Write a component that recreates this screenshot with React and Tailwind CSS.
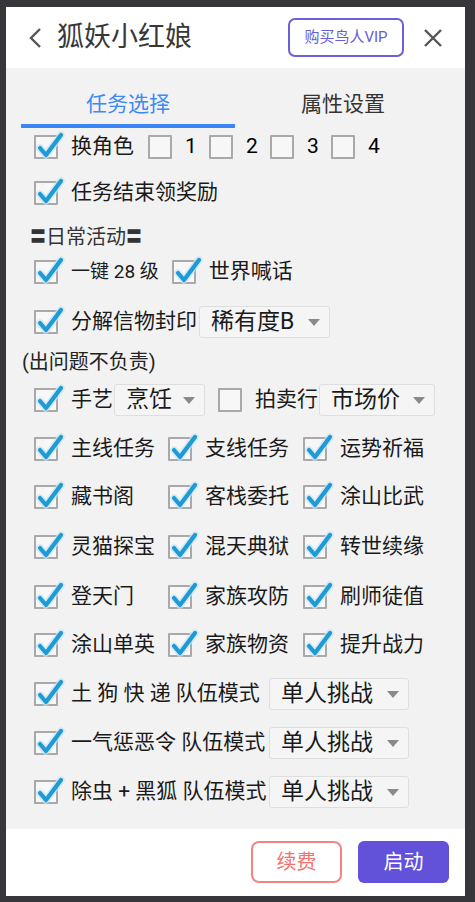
import React from "react";

const Box = ({ checked = true }) => (
  <span className="relative inline-block w-[24px] h-[24px] shrink-0 border-2 border-[#a9a9a9] bg-[#f7f7f7] rounded-[1px]">
    {checked && (
      <svg className="absolute left-[-4px] top-[-8px] overflow-visible" width="34" height="34" viewBox="0 0 34 34">
        <path d="M8 19 L14 26 L29 6" fill="none" stroke="#c4e6f6" strokeWidth="7.5" strokeLinecap="round" strokeLinejoin="round" opacity="0.7" />
        <path d="M8 19 L14 26 L29 6" fill="none" stroke="#1f9ad4" strokeWidth="4.2" strokeLinecap="round" strokeLinejoin="round" />
      </svg>
    )}
  </span>
);

const Select = ({ value, className }) => (
  <div className={`h-[32px] flex items-center justify-between border border-[#dedede] bg-[#f5f5f5] rounded-[3px] pl-[11px] pr-[9px] text-[23px] text-[#1a1a1a] ${className}`}>
    <span>{value}</span>
    <svg width="12" height="7" viewBox="0 0 12 7"><path d="M0 0 H12 L6 7 Z" fill="#8a8a8a" /></svg>
  </div>
);

const Item = ({ label, checked = true, className = "" }) => (
  <div className={`flex items-center gap-[13px] ${className}`}>
    <Box checked={checked} />
    <span className="text-[21px] text-[#1a1a1a] whitespace-nowrap">{label}</span>
  </div>
);

const grid = [
  ["主线任务", "支线任务", "运势祈福"],
  ["藏书阁", "客栈委托", "涂山比武"],
  ["灵猫探宝", "混天典狱", "转世续缘"],
  ["登天门", "家族攻防", "刷师徒值"],
  ["涂山单英", "家族物资", "提升战力"],
];
const gridGaps = ["mt-[17px]", "mt-[16px]", "mt-[18px]", "mt-[18px]", "mt-[16px]"];

const team = [
  ["土 狗 快 递 队伍模式", "mt-[17px]"],
  ["一气惩恶令 队伍模式", "mt-[17px]"],
  ["除虫 + 黑狐 队伍模式", "mt-[17px]"],
];

export default function App() {
  return (
    <div className="w-[475px] h-[902px] bg-[#37373b] pt-[7px] pl-[6px] font-['Roboto','Noto_Sans_CJK_SC',sans-serif]">
      <div className="w-[459px] h-[889px] bg-white flex flex-col">
        {/* header */}
        <div className="h-[61px] flex items-center px-[22px]">
          <svg width="16" height="22" viewBox="0 0 16 22" className="mr-[13px]">
            <path d="M12 2 L3 11 L12 20" fill="none" stroke="#555" strokeWidth="2.4" />
          </svg>
          <span className="text-[27px] text-[#383838]">狐妖小红娘</span>
          <div className="ml-auto h-[39px] w-[116px] border-2 border-[#6c5fdc] rounded-[7px] flex items-center justify-center text-[15px] text-[#6a5cd8]">
            购买鸟人VIP
          </div>
          <svg width="20" height="20" viewBox="0 0 20 20" className="ml-[19px]">
            <path d="M2 2 L18 18 M18 2 L2 18" stroke="#555" strokeWidth="2.4" />
          </svg>
        </div>

        {/* content */}
        <div className="h-[761px] bg-[#f2f2f2] pl-[28px] flex flex-col">
          <div className="-ml-[13px] w-[430px] flex h-[60px]">
            <div className="w-[214px] flex flex-col items-center justify-end">
              <span className="text-[21px] text-[#3d89f5] leading-none mb-[9px]">任务选择</span>
              <div className="w-full h-[4px] bg-[#3b85f6]" />
            </div>
            <div className="flex-1 flex flex-col items-center justify-end">
              <span className="text-[21px] text-[#333] leading-none mb-[13px]">属性设置</span>
            </div>
          </div>

          <div className="mt-[3px] h-[32px] flex items-center">
            <Item label="换角色" />
            <div className="flex items-center ml-[14px] gap-[13px]">
              <Box checked={false} /><span className="text-[21px] w-[11px]">1</span>
              <Box checked={false} /><span className="text-[21px] w-[11px]">2</span>
              <Box checked={false} /><span className="text-[21px] w-[11px]">3</span>
              <Box checked={false} /><span className="text-[21px] w-[11px]">4</span>
            </div>
          </div>

          <div className="mt-[14px] h-[32px] flex items-center">
            <Item label="任务结束领奖励" />
          </div>

          <div className="mt-[12px] h-[32px] flex items-center -ml-[4px] text-[20px] text-[#333]">
            <span className="text-[16px]">〓</span>日常活动<span className="text-[16px]">〓</span>
          </div>

          <div className="mt-[3px] h-[32px] flex items-center">
            <Item label={<span className="text-[19px]">一键 28 级</span>} />
            <Item label="世界喊话" className="ml-[13px]" />
          </div>

          <div className="mt-[18px] h-[32px] flex items-center">
            <Item label="分解信物封印" />
            <Select value="稀有度B" className="w-[131px] ml-[2px]" />
          </div>

          <div className="mt-[8px] h-[32px] flex items-center -ml-[12px] text-[20px] text-[#222]">(出问题不负责)</div>

          <div className="mt-[6px] h-[32px] flex items-center">
            <Item label="手艺" />
            <Select value="烹饪" className="w-[91px] ml-[1px]" />
            <Item label="拍卖行" checked={false} className="ml-[13px]" />
            <Select value="市场价" className="w-[116px] ml-[1px]" />
          </div>

          {grid.map((row, i) => (
            <div key={i} className={`${gridGaps[i]} h-[32px] grid grid-cols-[134px_135px_1fr] items-center`}>
              {row.map((l) => <Item key={l} label={l} />)}
            </div>
          ))}

          {team.map(([l, m], i) => (
            <div key={i} className={`${m} h-[32px] flex items-center`}>
              <Box />
              <span className="ml-[13px] w-[198px] text-[21px] text-[#1a1a1a] whitespace-nowrap">{l}</span>
              <Select value="单人挑战" className="w-[140px]" />
            </div>
          ))}
        </div>

        {/* footer */}
        <div className="flex-1 flex justify-end items-start pt-[12px] pr-[16px] gap-[16px]">
          <div className="w-[91px] h-[42px] border-2 border-[#f58383] rounded-[8px] flex items-center justify-center text-[20px] text-[#f27070]">续费</div>
          <div className="w-[91px] h-[42px] bg-[#6252da] rounded-[6px] flex items-center justify-center text-[20px] text-white">启动</div>
        </div>
      </div>
    </div>
  );
}
